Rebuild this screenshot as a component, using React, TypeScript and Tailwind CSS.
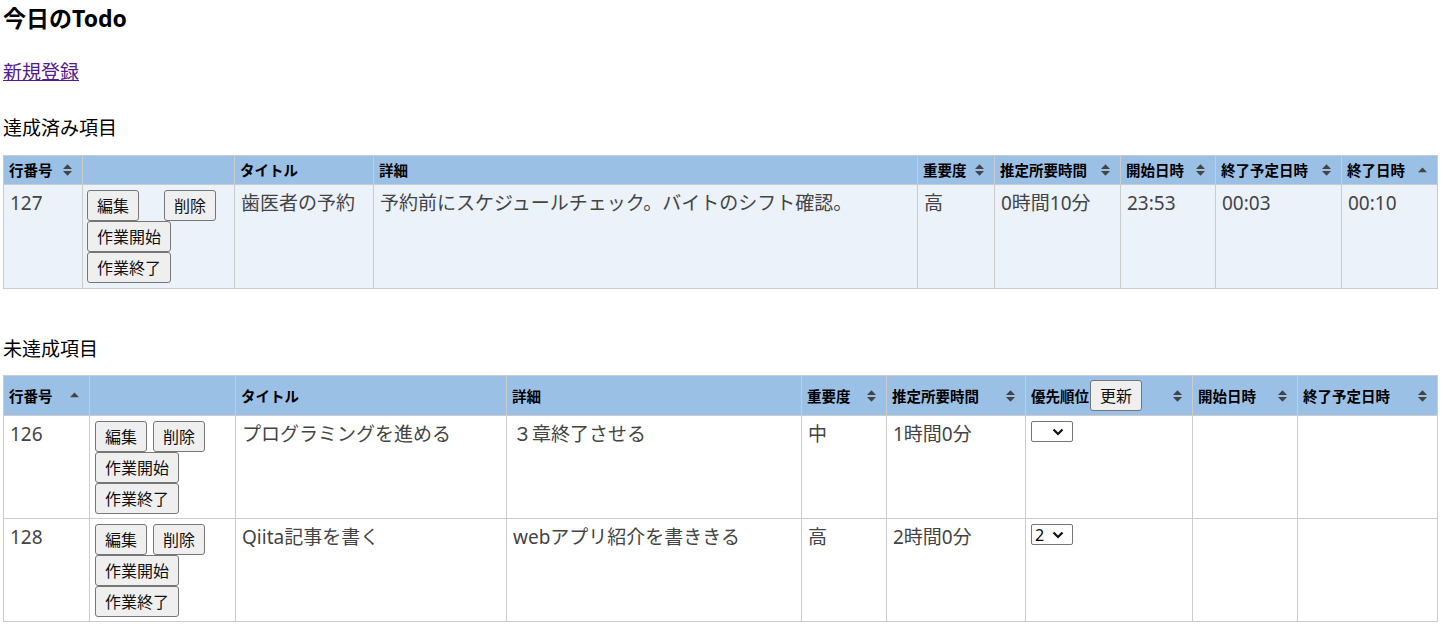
type Sort = "both" | "asc" | undefined;

type Col = { label: string; width: number; sort?: Sort; extra?: "update" };

const doneCols: Col[] = [
  { label: "行番号", width: 79, sort: "both" },
  { label: "", width: 152 },
  { label: "タイトル", width: 139 },
  { label: "詳細", width: 544 },
  { label: "重要度", width: 77, sort: "both" },
  { label: "推定所要時間", width: 126, sort: "both" },
  { label: "開始日時", width: 95, sort: "both" },
  { label: "終了予定日時", width: 126, sort: "both" },
  { label: "終了日時", width: 96, sort: "asc" },
];

const todoCols: Col[] = [
  { label: "行番号", width: 86, sort: "asc" },
  { label: "", width: 146 },
  { label: "タイトル", width: 271 },
  { label: "詳細", width: 295 },
  { label: "重要度", width: 85, sort: "both" },
  { label: "推定所要時間", width: 139, sort: "both" },
  { label: "優先順位", width: 167, sort: "both", extra: "update" },
  { label: "開始日時", width: 105, sort: "both" },
  { label: "終了予定日時", width: 140, sort: "both" },
];

const todos = [
  { id: 126, title: "プログラミングを進める", detail: "３章終了させる", level: "中", time: "1時間0分", order: "" },
  { id: 128, title: "Qiita記事を書く", detail: "webアプリ紹介を書ききる", level: "高", time: "2時間0分", order: "2" },
];

function SortIcon({ dir }: { dir: Sort }) {
  if (dir === "asc") {
    return (
      <svg width="9" height="11" viewBox="0 0 9 11">
        <path d="M0 7.2 L4.5 2.4 L9 7.2 Z" fill="#444" />
      </svg>
    );
  }
  return (
    <svg width="9" height="12" viewBox="0 0 9 12">
      <path d="M0 5 L4.5 0.2 L9 5 Z M0 7 L4.5 11.8 L9 7 Z" fill="#444" />
    </svg>
  );
}

function Btn({ children, className = "" }: { children: React.ReactNode; className?: string }) {
  return (
    <button
      className={
        "h-[31px] shrink-0 rounded-[3px] border border-[#767676] bg-[#efefef] px-[9px] text-[16px] leading-none whitespace-nowrap text-[#111] " +
        className
      }
    >
      {children}
    </button>
  );
}

function HeadRow({ cols }: { cols: Col[] }) {
  return (
    <tr className="bg-[#9bc0e6]">
      {cols.map((c, i) => (
        <th
          key={i}
          className="border border-[#cbcbcb] px-[5px] py-[4px] text-left align-middle text-[14.5px] font-bold leading-[20px] text-black"
        >
          <div className="flex items-center justify-between">
            <span className="flex items-center whitespace-nowrap">
              {c.label}
              {c.extra === "update" && <Btn className="ml-px font-normal">更新</Btn>}
            </span>
            {c.sort && (
              <span className="mr-[5px] flex">
                <SortIcon dir={c.sort} />
              </span>
            )}
          </div>
        </th>
      ))}
    </tr>
  );
}

function Actions({ wide }: { wide?: boolean }) {
  return (
    <div className="flex flex-col">
      <div className={"flex " + (wide ? "gap-[25px]" : "gap-[6px]")}>
        <Btn>編集</Btn>
        <Btn>削除</Btn>
      </div>
      <div className="flex">
        <Btn>作業開始</Btn>
      </div>
      <div className="flex">
        <Btn>作業終了</Btn>
      </div>
    </div>
  );
}

function Select({ value }: { value: string }) {
  return (
    <div className="flex h-[21px] w-[42px] items-center justify-between rounded-[2px] border border-[#767676] bg-white pr-[8px] pl-[3px] text-[16px] leading-none text-black">
      <span>{value}</span>
      <svg width="12" height="8" viewBox="0 0 12 8">
        <path d="M1.5 1.5 L6 6 L10.5 1.5" fill="none" stroke="#111" strokeWidth="2.2" />
      </svg>
    </div>
  );
}

const td = "border border-[#cbcbcb] align-top px-[6px] pt-[5px] text-[19px] leading-[26px] text-[#444]";

export default function App() {
  return (
    <div className="min-h-screen bg-white px-[3px] font-['Noto_Sans','Noto_Sans_CJK_JP',sans-serif] text-black">
      <h1 className="mt-[4px] text-[23px] leading-[28px] font-bold">今日のTodo</h1>

      <a href="#new" className="mt-[27px] inline-block text-[19px] leading-[26px] text-[#551a8b] underline">
        新規登録
      </a>

      <h2 className="mt-[30px] text-[19px] leading-[26px] font-normal">達成済み項目</h2>

      <table className="mt-[14px] w-[1435px] table-fixed border-collapse">
        <colgroup>
          {doneCols.map((c, i) => (
            <col key={i} style={{ width: c.width }} />
          ))}
        </colgroup>
        <thead>
          <HeadRow cols={doneCols} />
        </thead>
        <tbody>
          <tr className="bg-[#ebf2fa]">
            <td className={td}>127</td>
            <td className="border border-[#cbcbcb] px-[4px] py-[5px] align-top">
              <Actions wide />
            </td>
            <td className={td}>歯医者の予約</td>
            <td className={td}>予約前にスケジュールチェック。バイトのシフト確認。</td>
            <td className={td}>高</td>
            <td className={td}>0時間10分</td>
            <td className={td}>23:53</td>
            <td className={td}>00:03</td>
            <td className={td}>00:10</td>
          </tr>
        </tbody>
      </table>

      <h2 className="mt-[47px] text-[19px] leading-[26px] font-normal">未達成項目</h2>

      <table className="mt-[13px] w-[1435px] table-fixed border-collapse">
        <colgroup>
          {todoCols.map((c, i) => (
            <col key={i} style={{ width: c.width }} />
          ))}
        </colgroup>
        <thead>
          <HeadRow cols={todoCols} />
        </thead>
        <tbody>
          {todos.map((t) => (
            <tr key={t.id} className="bg-white">
              <td className={td}>{t.id}</td>
              <td className="border border-[#cbcbcb] px-[5px] pt-[5px] pb-[4px] align-top">
                <Actions />
              </td>
              <td className={td}>{t.title}</td>
              <td className={td}>{t.detail}</td>
              <td className={td}>{t.level}</td>
              <td className={td}>{t.time}</td>
              <td className="border border-[#cbcbcb] px-[5px] pt-[5px] align-top">
                <Select value={t.order} />
              </td>
              <td className={td}></td>
              <td className={td}></td>
            </tr>
          ))}
        </tbody>
      </table>
    </div>
  );
}
